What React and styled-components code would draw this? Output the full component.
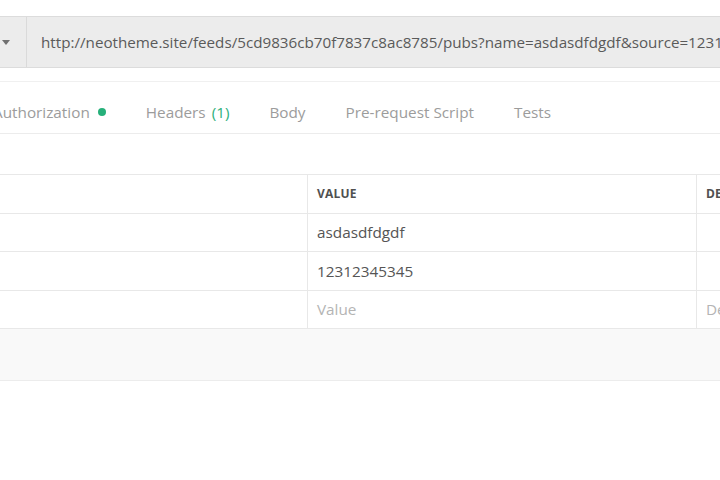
import styled, { createGlobalStyle } from "styled-components";

const GlobalStyle = createGlobalStyle`
    html, body {
        margin: 0;
        padding: 0;
        background: #ffffff;
    }
    body {
        width: 720px;
        height: 480px;
        overflow: hidden;
        font-family: 'Open Sans', 'Noto Sans', sans-serif;
    }
`;

const tabs = [
    { name: 'Authorization', dot: true },
    { name: 'Headers', count: 1 },
    { name: 'Body' },
    { name: 'Pre-request Script' },
    { name: 'Tests' },
];

const params = [
    { key: 'name', value: 'asdasdfdgdf' },
    { key: 'source', value: '12312345345' },
];

export default function App() {
    return (
        <>
            <GlobalStyle />
            <Canvas>
                <UrlBar>
                    <Method>
                        <span>GET</span>
                        <Caret />
                    </Method>
                    <UrlText>http://neotheme.site/feeds/5cd9836cb70f7837c8ac8785/pubs?name=asdasdfdgdf&amp;source=12312345345</UrlText>
                </UrlBar>
                <TabBar>
                    {tabs.map(tab => (
                        <Tab key={tab.name}>
                            {tab.name}
                            {tab.count && <Count>({tab.count})</Count>}
                            {tab.dot && <Dot />}
                        </Tab>
                    ))}
                </TabBar>
                <Table>
                    <Row>
                        <Cell />
                        <HeadCell>Value</HeadCell>
                        <HeadCell>Description</HeadCell>
                    </Row>
                    {params.map(param => (
                        <Row key={param.key}>
                            <Cell />
                            <Cell>{param.value}</Cell>
                            <Cell />
                        </Row>
                    ))}
                    <Row>
                        <Cell />
                        <Cell placeholder>Value</Cell>
                        <Cell placeholder>Description</Cell>
                    </Row>
                </Table>
                <Footer />
            </Canvas>
        </>
    );
}

const Canvas = styled.div`
    width: 1000px;
    margin-left: -60px;
    display: flex;
    flex-direction: column;
`;

const UrlBar = styled.div`
    margin-top: 16px;
    height: 50px;
    display: flex;
    align-items: stretch;
    background-color: #ececec;
    border-top: 1px solid #dcdcdc;
    border-bottom: 1px solid #dcdcdc;
`;

const Method = styled.div`
    width: 87px;
    display: flex;
    align-items: center;
    justify-content: flex-end;
    gap: 14px;
    padding-right: 16px;
    box-sizing: border-box;
    border-right: 1px solid #dadada;
    font-size: 14px;
    color: #555;
`;

const Caret = styled.div`
    width: 0;
    height: 0;
    border-left: 4px solid transparent;
    border-right: 4px solid transparent;
    border-top: 5px solid #707070;
`;

const UrlText = styled.div`
    display: flex;
    align-items: center;
    padding-left: 14px;
    font-size: 15.2px;
    color: #5a5a5a;
    white-space: nowrap;
`;

const TabBar = styled.div`
    margin-top: 13px;
    height: 53px;
    box-sizing: border-box;
    padding-top: 9px;
    display: flex;
    align-items: center;
    gap: 40px;
    padding-left: 53px;
    border-top: 1px solid #f0f0f0;
    border-bottom: 1px solid #ececec;
`;

const Tab = styled.div`
    display: flex;
    align-items: center;
    gap: 6px;
    font-size: 15.3px;
    color: #9c9c9c;
    white-space: nowrap;
`;

const Count = styled.span`
    color: #2eb07c;
`;

const Dot = styled.span`
    width: 8px;
    height: 8px;
    border-radius: 50%;
    background-color: #26b07a;
    margin-left: 2px;
`;

const Table = styled.div`
    margin-top: 40px;
    display: flex;
    flex-direction: column;
    border-top: 1px solid #e8e8e8;
`;

const Row = styled.div`
    display: grid;
    grid-template-columns: 367px 389px 1fr;
    height: 37.5px;
    border-bottom: 1px solid #e8e8e8;
`;

const Cell = styled.div`
    display: flex;
    align-items: center;
    padding-left: 9px;
    font-size: 15.3px;
    color: ${props => props.placeholder ? '#b4b4b4' : '#555'};
    & + & {
        border-left: 1px solid #e8e8e8;
    }
`;

const HeadCell = styled(Cell)`
    font-size: 12px;
    font-weight: 700;
    text-transform: uppercase;
    color: #505050;
    letter-spacing: 0.2px;
`;

const Footer = styled.div`
    height: 51px;
    background-color: #f9f9f9;
    border-bottom: 1px solid #ececec;
`;
